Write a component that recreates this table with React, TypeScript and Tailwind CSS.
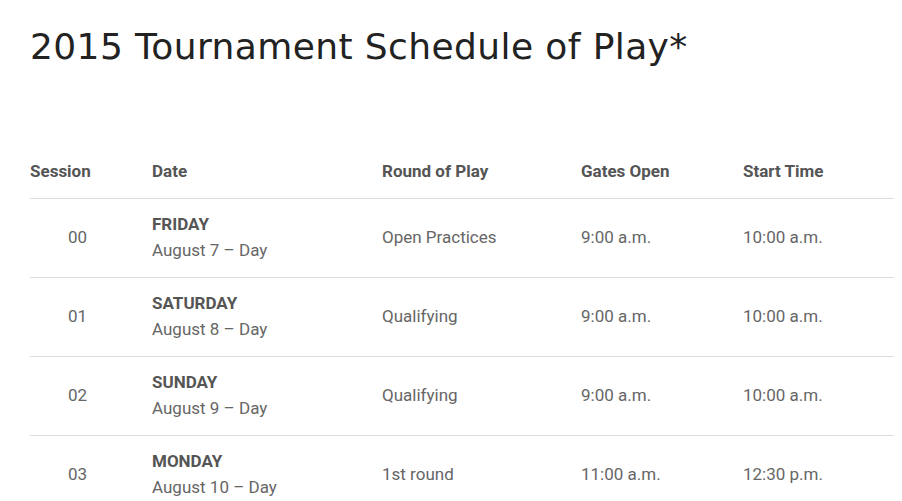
const rows = [
  { session: "00", day: "FRIDAY", date: "August 7 – Day", round: "Open Practices", gates: "9:00 a.m.", start: "10:00 a.m." },
  { session: "01", day: "SATURDAY", date: "August 8 – Day", round: "Qualifying", gates: "9:00 a.m.", start: "10:00 a.m." },
  { session: "02", day: "SUNDAY", date: "August 9 – Day", round: "Qualifying", gates: "9:00 a.m.", start: "10:00 a.m." },
  { session: "03", day: "MONDAY", date: "August 10 – Day", round: "1st round", gates: "11:00 a.m.", start: "12:30 p.m." },
]

const cols = "grid grid-cols-[95px_257px_199px_162px_151px]"

export default function App() {
  return (
    <div className="h-[501px] overflow-hidden bg-white pl-[30px] pr-[8px] pt-[26px]">
      <h1 className="font-['DejaVu_Sans'] text-[36px] font-normal leading-[42px] tracking-[0.4px] text-[#222]">
        2015 Tournament Schedule of Play*
      </h1>

      <div className="mt-[93px] font-['Roboto'] text-[17px] text-[#666]">
        <div className={`${cols} border-b border-[#ddd] pb-[17px] font-bold leading-[20px] text-[#555]`}>
          <div>Session</div>
          <div className="pl-[27px]">Date</div>
          <div>Round of Play</div>
          <div>Gates Open</div>
          <div>Start Time</div>
        </div>
        {rows.map((r) => (
          <div key={r.session} className={`${cols} h-[79px] items-center border-b border-[#ddd]`}>
            <div className="text-center">{r.session}</div>
            <div className="pb-[2px] pl-[27px] leading-[26px]">
              <div className="font-bold text-[#555]">{r.day}</div>
              <div>{r.date}</div>
            </div>
            <div>{r.round}</div>
            <div>{r.gates}</div>
            <div>{r.start}</div>
          </div>
        ))}
      </div>
    </div>
  )
}
